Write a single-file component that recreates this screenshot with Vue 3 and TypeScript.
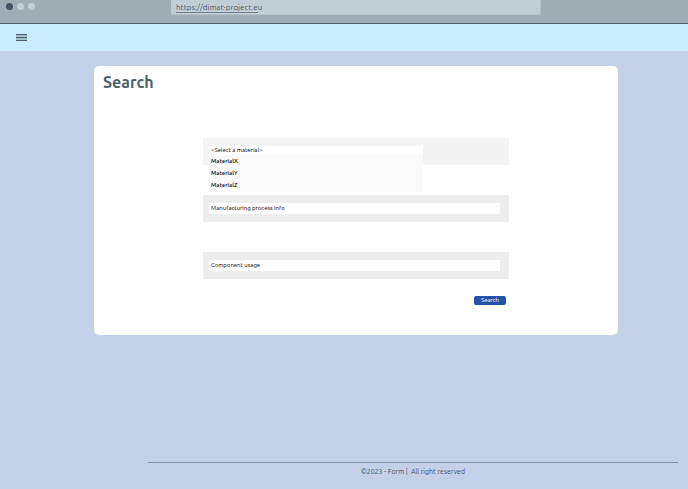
<script setup lang="ts">
import { ref } from 'vue'

const materials: string[] = ['MaterialX', 'MaterialY', 'MaterialZ']
const material = ref<string>('')
const menuOpen = ref<boolean>(true)
const processInfo = ref<string>('Manufacturing process info')
const usage = ref<string>('Component usage')

function choose(name: string): void {
  material.value = name
  menuOpen.value = false
}
</script>

<template>
  <div class="page">
    <header class="chrome">
      <div class="dots" aria-hidden="true">
        <span class="dot dark"></span>
        <span class="dot"></span>
        <span class="dot"></span>
      </div>
      <div class="address"><a href="https://dimat-project.eu"><span class="link">https://dimat-project.e</span>u</a></div>
    </header>

    <nav class="toolbar">
      <button class="menu-button" type="button" aria-label="Menu">
        <svg width="11" height="8" viewBox="0 0 11 8" aria-hidden="true">
          <rect width="11" height="7" fill="#a0c0cc" />
          <path d="M0 .5h11M0 3.5h11M0 6.5h11" stroke="#4a5d69" />
        </svg>
      </button>
    </nav>

    <main class="card">
      <h1>Search</h1>
      <form class="form" @submit.prevent>
        <div class="field light">
          <div class="picker">
            <select v-model="material" aria-label="Material">
              <option value="">&lt;Select a material&gt;</option>
              <option v-for="name in materials" :key="name" :value="name">{{ name }}</option>
            </select>
            <ul v-if="menuOpen" class="options">
              <li v-for="name in materials" :key="name">
                <button type="button" @click="choose(name)">{{ name }}</button>
              </li>
            </ul>
          </div>
        </div>
        <div class="field">
          <input v-model="processInfo" type="text" aria-label="Manufacturing process info" />
        </div>
        <div class="field">
          <input v-model="usage" type="text" aria-label="Component usage" />
        </div>
        <button class="submit" type="submit">Search</button>
      </form>
    </main>

    <footer class="footer">©2023 - Form |&nbsp; All right reserved</footer>
  </div>
</template>

<style>
body {
  background: #c4cfe8;
}
</style>

<style scoped>
.page {
  display: flex;
  flex-direction: column;
  min-height: 100vh;
  background: #c4cfe8;
  color: #50606d;
  font-family: Ubuntu, "Noto Sans", "Open Sans", sans-serif;
}

.page * {
  box-sizing: border-box;
}

.chrome {
  display: flex;
  align-items: flex-start;
  height: 24px;
  padding-right: 147px;
  background: #a1adb5;
  border-bottom: 1px solid #4e5b6b;
}

.dots {
  display: flex;
  gap: 4px;
  width: 171px;
  padding: 3px 6px;
}

.dot {
  width: 7px;
  height: 7px;
  border-radius: 50%;
  background: #c3d0d8;
}

.dot.dark {
  background: #455364;
}

.address {
  flex: 1;
  height: 15px;
  padding-left: 5px;
  background: #c2ced6;
  border: 1px solid #b5c2ca;
  border-top: 0;
  border-left: 0;
  font-size: 8px;
  line-height: 15px;
}

.address a {
  color: #4a5964;
  text-decoration: none;
}

.link {
  border-bottom: 1px solid #70808b;
}

.toolbar {
  display: flex;
  align-items: center;
  height: 27px;
  padding-left: 16px;
  background: #c9ecff;
}

button {
  margin: 0;
  padding: 0;
  border: 0;
  background: none;
  color: inherit;
  font: inherit;
}

.menu-button svg {
  display: block;
}

.card {
  margin: 15px 70px 0 94px;
  padding: 6px 9px 30px;
  border-radius: 5px;
  background: #fff;
}

h1 {
  margin: 0;
  font-size: 16px;
  font-weight: 700;
  line-height: 20px;
}

.form {
  display: flex;
  flex-direction: column;
  gap: 30px;
  padding: 46px 100px 0;
  color: #000;
  font-size: 6px;
}

.field {
  height: 27px;
  padding: 8px 9px 8px 6px;
  background: #ededed;
}

.field.light {
  background: #f4f4f4;
}

.picker {
  position: relative;
  width: 73.5%;
}

select,
input {
  display: block;
  width: 100%;
  height: 11px;
  margin: 0;
  padding: 0 2px 2px;
  border: 0;
  border-radius: 0;
  outline: 0;
  appearance: none;
  background: #fff;
  color: #000;
  font: inherit;
  line-height: 9px;
}

select {
  height: 9px;
  line-height: 7px;
}

.options {
  position: absolute;
  top: 100%;
  left: 0;
  width: 100%;
  margin: 0;
  padding: 0 0 2px;
  background: #fafafa;
  list-style: none;
}

.options button {
  display: block;
  width: 100%;
  padding: 0 2px;
  text-align: left;
  font-weight: 500;
  line-height: 11px;
}

.options li + li {
  margin-top: 1px;
}

.submit {
  align-self: flex-end;
  width: 32px;
  height: 9px;
  margin: -13px 3px 0 0;
  padding-bottom: 1px;
  border-radius: 2px;
  background: #2453a8;
  color: #fff;
  line-height: 8px;
}

.footer {
  margin: auto 10px 0 148px;
  padding: 3px 0 13px;
  border-top: 1px solid #8490ad;
  color: #46525f;
  font-size: 7px;
  line-height: 10px;
  text-align: center;
}
</style>
